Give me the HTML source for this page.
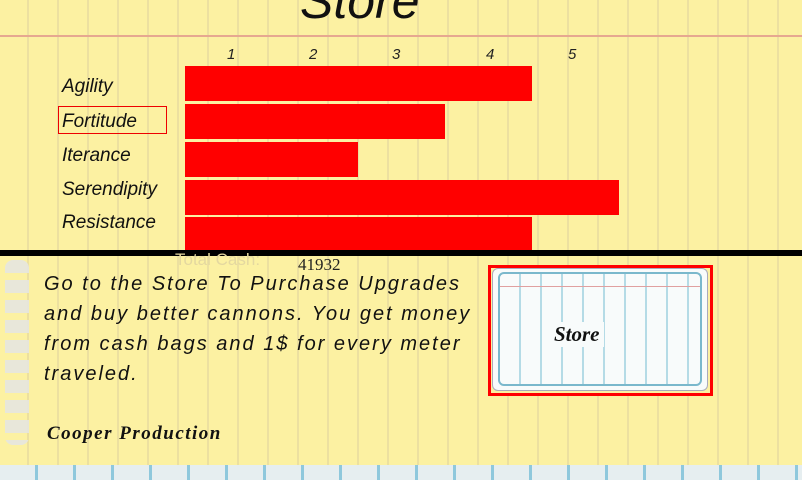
<!DOCTYPE html>
<html><head><meta charset="utf-8"><style>
*{margin:0;padding:0}
body{width:802px;height:480px;overflow:hidden;position:relative;font-family:"Liberation Sans",sans-serif;
background:#fcf1a2;}
.bg{position:absolute;left:0;top:0;width:802px;height:480px;
background-image:repeating-linear-gradient(90deg,transparent 0 27px,#ece0a0 27px 29px,transparent 29px 30px);}
.ab{position:absolute}
.bar{position:absolute;left:185px;background:#ff0000;height:35px}
.lbl{position:absolute;left:62px;font-size:19px;color:#111;font-style:italic}
.num{position:absolute;top:46px;font-size:15px;color:#222;font-style:italic}
.txt{position:absolute;left:44px;font-size:20px;color:#111;font-style:italic;letter-spacing:2px;line-height:30px;white-space:nowrap}
</style></head><body>
<div class="bg"></div>
<div class="ab" style="left:300px;top:-28px;font-size:50px;font-style:italic;color:#111">Store</div>
<div class="ab" style="left:0;top:35px;width:802px;height:2px;background:#e6a890"></div>
<div class="num" style="left:227px">1</div>
<div class="num" style="left:309px">2</div>
<div class="num" style="left:392px">3</div>
<div class="num" style="left:486px">4</div>
<div class="num" style="left:568px">5</div>
<div class="bar" style="top:66px;width:347px"></div>
<div class="bar" style="top:104px;width:260px"></div>
<div class="bar" style="top:142px;width:173px"></div>
<div class="bar" style="top:180px;width:434px"></div>
<div class="bar" style="top:217px;width:347px;height:33px"></div>
<div class="lbl" style="top:76px">Agility</div>
<div class="lbl" style="top:111px">Fortitude</div>
<div class="ab" style="left:58px;top:106px;width:107px;height:26px;border:1px solid #e00"></div>
<div class="lbl" style="top:145px">Iterance</div>
<div class="lbl" style="top:179px">Serendipity</div>
<div class="lbl" style="top:212px">Resistance</div>
<div class="ab" style="left:0;top:250px;width:802px;height:6px;background:#000"></div>
<div class="ab" style="left:175px;top:250px;font-size:17px;color:#e4d8a0">Total Cash:</div>
<div class="ab" style="left:298px;top:255px;font-size:17px;color:#222;font-family:'Liberation Serif',serif">41932</div>
<div class="ab" style="left:5px;top:260px;width:24px;height:185px;background:repeating-linear-gradient(180deg,#e6e6e0 0 13px,transparent 13px 20px);border-radius:8px;opacity:.9"></div>
<div class="txt" style="top:269px">Go to the Store To Purchase Upgrades<br>and buy better cannons. You get money<br>from cash bags and 1$ for every meter<br>traveled.</div>
<div class="ab" style="left:47px;top:423px;font-size:19px;letter-spacing:1.5px;font-weight:bold;font-style:italic;color:#111;font-family:'Liberation Serif',serif">Cooper Production</div>
<div class="ab" style="left:488px;top:265px;width:225px;height:131px;box-sizing:border-box;border:3px solid #f00;background:#fcf1a2"></div>
<div class="ab" style="left:492px;top:268px;width:216px;height:123px;box-sizing:border-box;border-radius:6px;background:#f8fbfb;border:1px solid #aab"></div>
<div class="ab" style="left:498px;top:272px;width:204px;height:114px;box-sizing:border-box;border:2px solid #7ab8cc;border-radius:6px;background-image:repeating-linear-gradient(90deg,transparent 0 19px,#b5dbe6 19px 21px)"></div>
<div class="ab" style="left:500px;top:286px;width:200px;height:1px;background:#e0a0a0"></div>
<div class="ab" style="left:550px;top:322px;font-size:21px;font-weight:bold;font-style:italic;color:#111;font-family:'Liberation Serif',serif;background:#f8fbfb;padding:0 4px">Store</div>
<div class="ab" style="left:0;top:465px;width:802px;height:15px;background:#e6eef0;background-image:repeating-linear-gradient(90deg,transparent 0 35px,#8fc8dc 35px 38px)"></div>
</body></html>
